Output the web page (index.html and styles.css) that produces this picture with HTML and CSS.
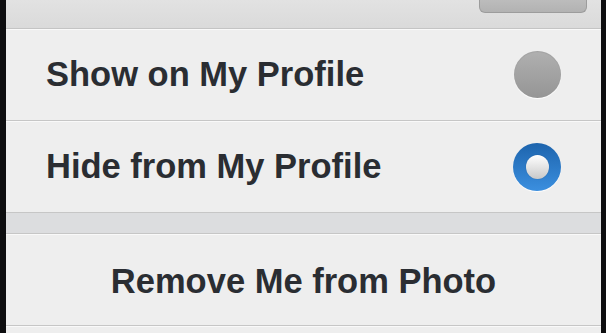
FILE: index.html
```html
<!DOCTYPE html>
<html>
<head>
<meta charset="utf-8">
<link rel="stylesheet" href="styles.css">
</head>
<body>
<div class="frame">
  <div class="panel">
    <div class="header">
      <div class="hbtn"></div>
    </div>
    <div class="row">
      <span class="label">Show on My Profile</span>
      <span class="radio off"></span>
    </div>
    <div class="row">
      <span class="label">Hide from My Profile</span>
      <span class="radio on"><span class="dot"></span></span>
    </div>
    <div class="band"></div>
    <div class="row action">
      <span class="label lower">Remove Me from Photo</span>
    </div>
    <div class="rest"></div>
  </div>
</div>
</body>
</html>
```
FILE: styles.css
```css
html, body {
  margin: 0;
  padding: 0;
  background: #0d0d0f;
  height: 100%;
  overflow: hidden;
}
.frame {
  display: flex;
  height: 333px;
  padding-left: 6px;
}
.panel {
  width: 595px;
  background: #eeeeee;
  display: flex;
  flex-direction: column;
  font-family: "Liberation Sans", Arial, sans-serif;
  font-weight: bold;
  color: #2a2d32;
}
.header {
  height: 28px;
  flex: none;
  background: linear-gradient(#e2e2e2, #dadada);
  border-bottom: 1px solid #c4c4c4;
  display: flex;
  justify-content: flex-end;
  align-items: flex-start;
  padding-right: 14px;
}
.hbtn {
  width: 106px;
  height: 12px;
  background: linear-gradient(#bcbcbc, #b2b2b2);
  border: 1px solid #9c9c9c;
  border-top: none;
  border-radius: 0 0 6px 6px;
}
.row {
  height: 91px;
  flex: none;
  display: flex;
  align-items: center;
  justify-content: space-between;
  padding: 0 40px 0 40px;
  border-bottom: 1px solid #c6c6c6;
  box-shadow: inset 0 1px 0 #f9f9f9;
}
.label {
  font-size: 34.5px;
  letter-spacing: 0;
}
.label.lower {
  padding-top: 4px;
}
.action {
  justify-content: center;
  padding: 0;
}
.radio {
  width: 48px;
  height: 48px;
  border-radius: 50%;
  display: flex;
  align-items: center;
  justify-content: center;
  box-sizing: border-box;
}
.radio.off {
  width: 47px;
  height: 47px;
  background: linear-gradient(#b0b0b0, #959595);
  box-shadow: 0 1px 1px #ffffff, inset 0 1px 1px rgba(0,0,0,0.08);
}
.radio.on {
  background: linear-gradient(#1d64ad, #3b8fdf);
  box-shadow: 0 1px 1px #ffffff;
}
.dot {
  width: 23px;
  height: 24px;
  border-radius: 50%;
  background: linear-gradient(#ffffff, #c9c9c9);
  box-shadow: 0 0 1px rgba(0,0,0,0.3);
}
.band {
  height: 20px;
  flex: none;
  background: #dcdddf;
  border-bottom: 1px solid #c6c6c6;
}
.rest {
  flex: 1;
  background: #eeeeee;
  box-shadow: inset 0 1px 0 #f9f9f9;
}
```
